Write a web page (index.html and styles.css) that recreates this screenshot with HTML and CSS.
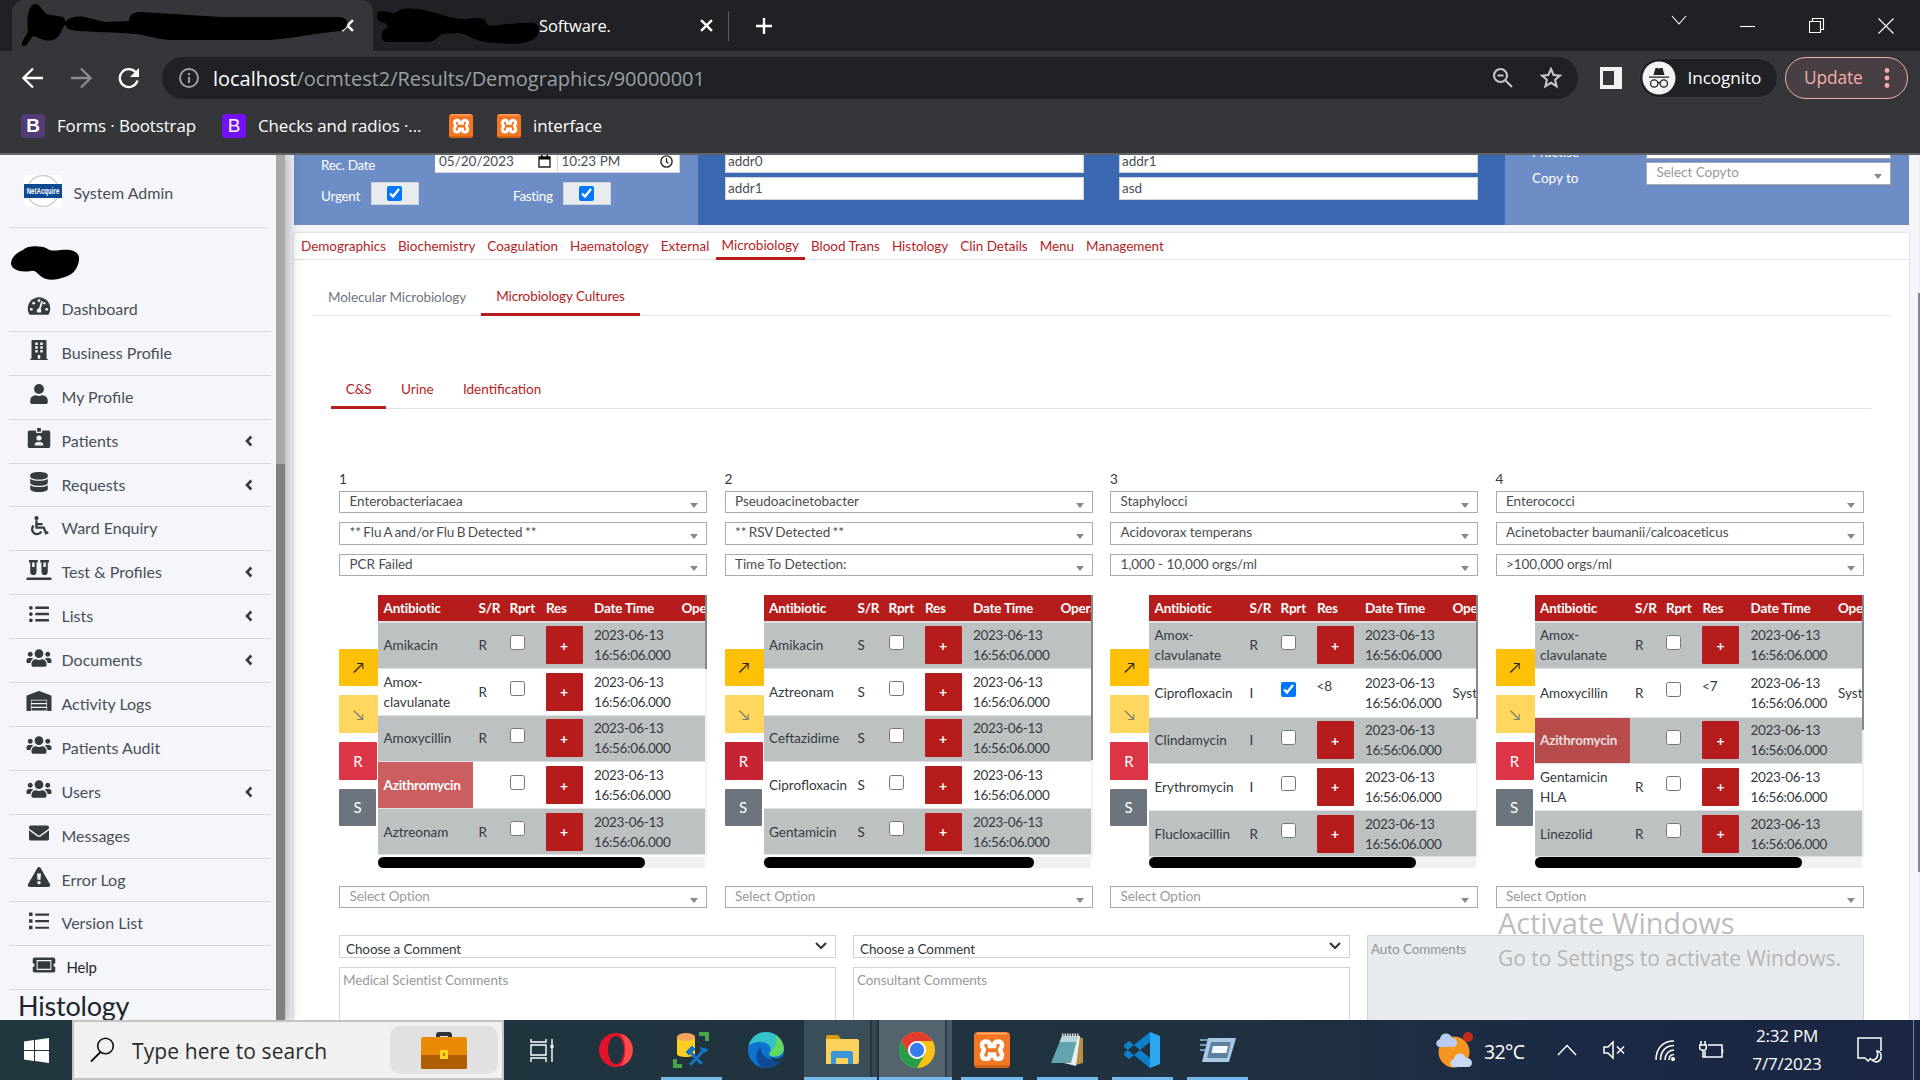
FILE: index.html
```html
<!DOCTYPE html>
<html lang="en">
<head>
<meta charset="utf-8">
<title>Results</title>
<link rel="stylesheet" href="styles.css">
</head>
<body>
<svg class="defs" width="0" height="0" aria-hidden="true">
  <symbol id="i-users" viewBox="0 0 640 512"><path d="M96 224c35 0 64-29 64-64s-29-64-64-64-64 29-64 64 29 64 64 64zm448 0c35 0 64-29 64-64s-29-64-64-64-64 29-64 64 29 64 64 64zm32 32h-64c-18 0-34 7-45 19 40 22 69 62 75 109h66c18 0 32-14 32-32v-32c0-35-29-64-64-64zm-256 0c62 0 112-50 112-112S382 32 320 32 208 82 208 144s50 112 112 112zm77 32h-8c-21 10-44 16-69 16s-48-6-69-16h-8c-64 0-115 52-115 115v29c0 27 22 48 48 48h288c27 0 48-21 48-48v-29c0-63-51-115-115-115zm-224-13c-11-12-27-19-45-19H64c-35 0-64 29-64 64v32c0 18 14 32 32 32h66c6-47 35-87 75-109z"/></symbol>
  <symbol id="i-list" viewBox="0 0 512 512"><path d="M48 48a48 48 0 1 0 0 96 48 48 0 0 0 0-96zm0 160a48 48 0 1 0 0 96 48 48 0 0 0 0-96zm0 160a48 48 0 1 0 0 96 48 48 0 0 0 0-96zM176 64h320c9 0 16 7 16 16v32c0 9-7 16-16 16H176c-9 0-16-7-16-16V80c0-9 7-16 16-16zm0 160h320c9 0 16 7 16 16v32c0 9-7 16-16 16H176c-9 0-16-7-16-16v-32c0-9 7-16 16-16zm0 160h320c9 0 16 7 16 16v32c0 9-7 16-16 16H176c-9 0-16-7-16-16v-32c0-9 7-16 16-16z"/></symbol>
  <symbol id="i-left" viewBox="0 0 8 12"><path d="M6.3 1.5 2 6l4.300 4.500" fill="none" stroke="#343a40" stroke-width="2.600"/></symbol>
  <symbol id="i-xampp" viewBox="0 0 36 36"><rect width="36" height="36" rx="4" fill="#f37623"/><path d="M3 1.500h30" stroke="#ffb27c" stroke-width="1.500"/><path d="M1 34.500h34" stroke="#c95b10" stroke-width="2"/><path d="M12 9.500c-4 0-5 4-3 6.500 1 1 1 2.500 0 4-2 3-1 7 3 7 3 0 4-2 4-4.500h4c0 2.500 1 4.500 4 4.500 4 0 5-4 3-7-1-1.500-1-3 0-4 2-2.500 1-6.500-3-6.500-3 0-4 2-4 4.500h-4c0-2.500-1-4.500-4-4.500z" fill="none" stroke="#fff" stroke-width="4.500"/></symbol>
  <symbol id="i-x" viewBox="0 0 12 12"><path d="M1 1l10 10M11 1 1 11" stroke="#fff" stroke-width="2.200"/></symbol>
</svg>

<header class="browser">
  <div class="tabstrip">
    <div class="tab tab-active">
      <svg class="ink" width="332" height="44" viewBox="0 0 332 44"><path d="M1 40C2 34 6 32 7 26 5 14 8 0 14 0c6 0 7 8 12 10 7 2 14 2 16 3 3 3 2 5 2 5 6-7 18-6 24-4l16 4 24-1c0-7 6-9 12-9l80 5h118c12 1 10 11 2 14-20 1-50 8-72 9h-98c-10 0-22-4-35-6-25-2-55-2-65-4-6-2-6-6-6-6-4 8-6 14-12 16-8 2-12-2-20-4l-6 8c-2 3-5 3-5 0z"/></svg>
      <svg width="13" height="13"><use href="#i-x"/></svg>
    </div>
    <div class="tab">
      <svg class="ink" width="164" height="38" viewBox="0 0 164 38"><path d="M0 7c2-5 10-2 18-1 6-5 14-5 22-4 20 2 30 10 46 10 10 0 16-3 22 1 2 3 1 5 5 6 12-1 22-3 36-3 14-2 14 5 12 11-6 12-28 10-40 9-14 0-26-4-33-9-8-2-14 0-23 0-6 4-8 8-14 8H10c-8-2-6-10-2-13 5-3 2-5-1-6-5-1-8-4-7-9z"/></svg>
      <span class="tab-title">Software.</span>
      <svg width="13" height="13"><use href="#i-x"/></svg>
    </div>
    <svg class="plus" width="18" height="18" viewBox="0 0 18 18"><path d="M9 1v16M1 9h16" stroke="#fff" stroke-width="2.400"/></svg>
    <div class="win">
      <svg width="16" height="16" viewBox="0 0 16 16"><path d="M1 4l7 8 7-8"/></svg>
      <svg width="16" height="16" viewBox="0 0 16 16"><path d="M0 8.500h15"/></svg>
      <svg width="16" height="16" viewBox="0 0 16 16"><path d="M.5 3.500h11v11H.5zM3.500 3.500v-3h11v11h-3"/></svg>
      <svg width="16" height="16" viewBox="0 0 16 16"><path d="M.5.5l15 15M15.500.5l-15 15"/></svg>
    </div>
  </div>
  <div class="toolbar">
    <svg class="nav-i" width="22" height="22" viewBox="0 0 22 22"><path d="M21 11H2M11 1.500 1.500 11l9.500 9.500" stroke="#fff"/></svg>
    <svg class="nav-i" width="22" height="22" viewBox="0 0 22 22"><path d="M1 11h19M11 1.500l9.500 9.500-9.500 9.500" stroke="#8a8b8e"/></svg>
    <svg class="nav-i" width="22" height="22" viewBox="0 0 22 22"><path d="M19.500 13.500A9 9 0 1 1 17.500 5" stroke="#fff"/><path class="tip" d="M21 1v9h-9z"/></svg>
    <div class="omnibox">
      <svg width="22" height="22" viewBox="0 0 22 22"><circle cx="11" cy="11" r="9" fill="none" stroke="#9aa0a6" stroke-width="2"/><path d="M11 10v6M11 6v2.200" stroke="#9aa0a6" stroke-width="2"/></svg>
      <span class="url"><b>localhost</b>/ocmtest2/Results/Demographics/90000001</span>
      <svg class="zoom-i" width="22" height="22" viewBox="0 0 22 22"><circle cx="8.500" cy="8.500" r="6.500"/><path d="M13.500 13.500l6.500 6.500M5.500 8.500h6"/></svg>
      <svg class="zoom-i" width="22" height="22" viewBox="0 0 22 22"><path d="M11 2l2.600 6 6.400.6-4.900 4.200 1.500 6.400L11 15.800l-5.600 3.400 1.500-6.400L2 8.600 8.400 8z"/></svg>
    </div>
    <svg width="22" height="22" viewBox="0 0 22 22"><path d="M0 0h22v22H0z" fill="#f1f3f4"/><path d="M3 4h11v14H3z" fill="#35363a"/></svg>
    <div class="incog"><svg width="34" height="34" viewBox="0 0 34 34"><circle cx="17" cy="17" r="16.500" fill="#f1f3f4"/><path d="M11.500 14 13.500 7h2.300l1.200.7 1.200-.7h2.300l2 7zM7 15.500h20v1.200H7z" fill="#202124"/><path d="M16 22c.6-.6 1.400-.6 2 0" fill="none" stroke="#202124" stroke-width="1.300"/><circle cx="12.200" cy="22.500" r="3.700" fill="none" stroke="#202124" stroke-width="1.300"/><circle cx="21.800" cy="22.500" r="3.700" fill="none" stroke="#202124" stroke-width="1.300"/></svg><span>Incognito</span></div>
    <div class="update"><span>Update</span><svg width="6" height="22" viewBox="0 0 6 22" fill="#f6aea9"><circle cx="3" cy="3.500" r="2.400"/><circle cx="3" cy="11" r="2.400"/><circle cx="3" cy="18.500" r="2.400"/></svg></div>
  </div>
  <div class="bookmarks">
    <span class="bm bm1"><i class="bs">B</i>Forms · Bootstrap</span>
    <span class="bm bm2"><i class="bs bs2">B</i>Checks and radios ·...</span>
    <svg width="24" height="24"><use href="#i-xampp"/></svg>
    <span class="bm bm3"><svg width="24" height="24"><use href="#i-xampp"/></svg>interface</span>
  </div>
</header>

<div class="page">
  <aside class="sidebar">
    <div class="side-body">
      <div class="brand">
        <svg width="38" height="32" viewBox="0 0 38 32"><path d="M0 0h38v32H0z" fill="#fff"/><circle cx="19" cy="16" r="15.500" fill="none" stroke="#ccc" stroke-width="1.300"/><path d="M0 9h38v14H0z" fill="#0d4a92"/><text transform="translate(19 19) scale(.72 1)" text-anchor="middle" class="logo-t">NetAcquire</text></svg>
        <span>System Admin</span>
      </div>
      <svg class="blob" width="69" height="36" viewBox="0 0 69 36"><path d="M0 17C1 9 8 6 12 4c5-5 18-4 23-2 5 3 5 3 15 2 10-1 19 1 18 10-1 8-5 14-14 17-8 3-18 4-23 0-5-3-6-7-11-6C8 27 0 23 0 17z"/></svg>
      <nav class="menu">
        <a><svg viewBox="0 0 576 512"><path d="M288 32C129 32 0 161 0 320c0 53 14 102 39 145 6 9 16 15 28 15h442c12 0 22-6 28-15 25-43 39-92 39-145C576 161 447 32 288 32z"/><g fill="#f4f6fb"><circle cx="288" cy="116" r="36"/><circle cx="152" cy="184" r="36"/><circle cx="92" cy="340" r="36"/><circle cx="484" cy="340" r="36"/><circle cx="424" cy="184" r="30"/><path d="M345 130l45 14-60 190c20 22 22 60 8 90h-100c-20-45-4-98 50-110z"/></g></svg><span>Dashboard</span></a>
        <a><svg viewBox="0 0 448 512"><path d="M436 480h-20V24c0-13-11-24-24-24H56C43 0 32 11 32 24v456H12c-7 0-12 5-12 12v20h448v-20c0-7-5-12-12-12z"/><path fill="#f4f6fb" d="M128 64h64v64h-64zM256 64h64v64h-64zM128 160h64v64h-64zM256 160h64v64h-64zM128 256h64v64h-64zM256 256h64v64h-64zM192 384h64v96h-64z"/></svg><span>Business Profile</span></a>
        <a><svg viewBox="0 0 448 512"><circle cx="224" cy="128" r="128"/><path d="M314 288h-17a174 174 0 0 1-146 0h-17A134 134 0 0 0 0 422v42c0 27 22 48 48 48h352c27 0 48-21 48-48v-42a134 134 0 0 0-134-134z"/></svg><span>My Profile</span></a>
        <a><svg viewBox="0 0 576 512"><path d="M528 64H368v32c0 18-14 32-32 32h-96c-18 0-32-14-32-32V64H48C22 64 0 86 0 112v352c0 26 22 48 48 48h480c26 0 48-22 48-48V112c0-26-22-48-48-48z"/><path d="M240 0h96v96h-96z"/><g fill="#f4f6fb"><circle cx="288" cy="256" r="66"/><path d="M176 448c0-60 30-92 80-92h64c50 0 80 32 80 92z"/></g></svg><span>Patients</span><svg class="more"><use href="#i-left"/></svg></a>
        <a><svg viewBox="0 0 448 512"><path d="M448 73v46c0 40-100 73-224 73S0 159 0 119V73C0 33 100 0 224 0s224 33 224 73zm0 103v103c0 40-100 73-224 73S0 319 0 279V176c48 33 136 49 224 49s176-16 224-49zm0 160v103c0 40-100 73-224 73S0 479 0 439V336c48 33 136 49 224 49s176-16 224-49z"/></svg><span>Requests</span><svg class="more"><use href="#i-left"/></svg></a>
        <a><svg viewBox="0 0 512 512"><circle cx="192" cy="54" r="54"/><path d="M190 110v190h190l55 140 60-25M190 205h160M120 245a125 125 0 1 0 195 150" fill="none" stroke="#343a40" stroke-width="58"/></svg><span>Ward Enquiry</span></a>
        <a><svg viewBox="0 0 640 512"><path d="M640 464v32c0 9-7 16-16 16H16c-9 0-16-7-16-16v-32c0-9 7-16 16-16h608c9 0 16 7 16 16zM64 0h224v64h-32v240a80 80 0 0 1-160 0V64H64zm288 0h224v64h-32v240a80 80 0 0 1-160 0V64h-32z"/><path fill="#f4f6fb" d="M144 64h64v112h-64zM432 64h64v112h-64z"/></svg><span>Test &amp; Profiles</span><svg class="more"><use href="#i-left"/></svg></a>
        <a><svg><use href="#i-list"/></svg><span>Lists</span><svg class="more"><use href="#i-left"/></svg></a>
        <a><svg class="wide"><use href="#i-users"/></svg><span>Documents</span><svg class="more"><use href="#i-left"/></svg></a>
        <a><svg class="wide" viewBox="0 0 640 512"><path d="M0 512V145c0-15 8-28 22-34L300 4a56 56 0 0 1 40 0l278 107c14 6 22 19 22 34v367H528V224H112v288zM128 240h384v64H128zm0 96h384v64H128zm0 96h384v64H128z"/></svg><span>Activity Logs</span></a>
        <a><svg class="wide"><use href="#i-users"/></svg><span>Patients Audit</span></a>
        <a><svg class="wide"><use href="#i-users"/></svg><span>Users</span><svg class="more"><use href="#i-left"/></svg></a>
        <a><svg viewBox="0 0 512 512"><path d="M502 191c4-3 10 0 10 4v205c0 27-21 48-48 48H48c-27 0-48-21-48-48V195c0-5 6-7 10-4 22 18 52 40 155 114 21 16 57 48 91 48 34 0 71-33 91-48 103-74 133-96 155-114zM256 320c23 0 57-29 74-42 133-96 143-105 173-128 6-5 9-12 9-19v-19c0-27-21-48-48-48H48C21 64 0 85 0 112v19c0 7 3 14 9 19 31 24 41 32 173 128 17 13 51 42 74 42z"/></svg><span>Messages</span></a>
        <a><svg viewBox="0 0 576 512"><path d="M570 440c18 32-5 72-42 72H48c-37 0-60-40-42-72L246 24c18-32 65-32 84 0z"/><path fill="#f4f6fb" d="M240 168h96l-9 160h-78z"/><circle fill="#f4f6fb" cx="288" cy="400" r="44"/></svg><span>Error Log</span></a>
        <a><svg viewBox="0 0 512 512"><path d="M0 40h90v90H0zm0 170h90v90H0zm0 170h90v90H0zM160 64h352v56H160zm0 168h352v56H160zm0 168h352v56H160z"/></svg><span>Version List</span></a>
        <a class="help"><svg viewBox="0 0 576 512"><path d="M48 64h480c27 0 48 21 48 48v96a48 48 0 0 0 0 96v96c0 27-21 48-48 48H48c-27 0-48-21-48-48v-96a48 48 0 0 0 0-96v-96c0-27 21-48 48-48z"/><path d="M112 144h352v224H112z" fill="none" stroke="#f4f6fb" stroke-width="26"/></svg><span>Help</span></a>
      </nav>
      <h2>Histology</h2>
    </div>
    <div class="side-scroll"><i></i></div>
  </aside>

  <main class="main">
    <section class="patient">
      <div class="p-side">
        <div class="row r1"><label>Rec. Date</label><div class="dt"><span>05/20/2023</span><svg width="13" height="13" viewBox="0 0 13 13"><path d="M1 2h11v10H1z" fill="none" stroke="#222" stroke-width="1.400"/><path d="M1 2h11v2.500H1zM3 0h1.500v2H3zM8.500 0H10v2H8.500z"/></svg></div><div class="dt"><span>10:23 PM</span><svg width="13" height="13" viewBox="0 0 13 13"><circle cx="6.500" cy="6.500" r="5.600" fill="none" stroke="#222" stroke-width="1.400"/><path d="M6.500 3v4l2 1.200" fill="none" stroke="#222" stroke-width="1.300"/></svg></div></div>
        <div class="row r2"><label>Urgent</label><div class="cb"><input type="checkbox" checked></div><label class="fast">Fasting</label><div class="cb"><input type="checkbox" checked></div></div>
      </div>
      <div class="p-mid"><div class="f top">addr0</div><div class="f top">addr1</div><div class="f">addr1</div><div class="f">asd</div></div>
      <div class="p-right"><label class="cut">Practise</label><div class="sel cutsel"></div><label>Copy to</label><div class="sel ph">Select Copyto</div></div>
    </section>

    <section class="card">
      <nav class="tabs t1"><a>Demographics</a><a>Biochemistry</a><a>Coagulation</a><a>Haematology</a><a>External</a><a class="on">Microbiology</a><a>Blood Trans</a><a>Histology</a><a>Clin Details</a><a>Menu</a><a>Management</a></nav>
      <nav class="tabs t2"><a class="muted">Molecular Microbiology</a><a class="on">Microbiology Cultures</a></nav>
      <nav class="tabs t3"><a class="on">C&amp;S</a><a>Urine</a><a>Identification</a></nav>

      <div class="cols">
        <div class="col">
          <div class="num">1</div>
          <div class="sel">Enterobacteriacaea</div><div class="sel starred">** Flu A and/or Flu B Detected **</div><div class="sel">PCR Failed</div>
          <div class="grid">
            <div class="acts"><b class="up">↗</b><b class="down">↘</b><b class="r">R</b><b class="s">S</b></div>
            <div class="scroll"><div class="clip"><table>
              <tr><th class="c1">Antibiotic<th class="c2">S/R<th class="c3">Rprt<th class="c4">Res<th class="c5">Date Time<th class="c6">Operator</tr>
              <tr><td>Amikacin<td>R<td><input type="checkbox"><td><button>+</button><td>2023-06-13 16:56:06.000<td></tr>
              <tr><td>Amox-clavulanate<td>R<td><input type="checkbox"><td><button>+</button><td>2023-06-13 16:56:06.000<td></tr>
              <tr><td>Amoxycillin<td>R<td><input type="checkbox"><td><button>+</button><td>2023-06-13 16:56:06.000<td></tr>
              <tr><td class="hot">Azithromycin<td><td><input type="checkbox"><td><button>+</button><td>2023-06-13 16:56:06.000<td></tr>
              <tr><td>Aztreonam<td>R<td><input type="checkbox"><td><button>+</button><td>2023-06-13 16:56:06.000<td></tr>
            </table></div><div class="vbar"><i class="v1"></i></div><div class="hbar"><i></i></div></div>
          </div>
          <div class="sel ph">Select Option</div>
        </div>
        <div class="col">
          <div class="num">2</div>
          <div class="sel">Pseudoacinetobacter</div><div class="sel starred">** RSV Detected **</div><div class="sel">Time To Detection:</div>
          <div class="grid">
            <div class="acts"><b class="up">↗</b><b class="down">↘</b><b class="r dark">R</b><b class="s">S</b></div>
            <div class="scroll"><div class="clip"><table>
              <tr><th class="c1 slim">Antibiotic<th class="c2">S/R<th class="c3">Rprt<th class="c4">Res<th class="c5">Date Time<th class="c6">Operator</tr>
              <tr><td>Amikacin<td>S<td><input type="checkbox"><td><button>+</button><td>2023-06-13 16:56:06.000<td></tr>
              <tr><td>Aztreonam<td>S<td><input type="checkbox"><td><button>+</button><td>2023-06-13 16:56:06.000<td></tr>
              <tr><td>Ceftazidime<td>S<td><input type="checkbox"><td><button>+</button><td>2023-06-13 16:56:06.000<td></tr>
              <tr><td>Ciprofloxacin<td>S<td><input type="checkbox"><td><button>+</button><td>2023-06-13 16:56:06.000<td></tr>
              <tr><td>Gentamicin<td>S<td><input type="checkbox"><td><button>+</button><td>2023-06-13 16:56:06.000<td></tr>
            </table></div><div class="vbar"><i class="v2"></i></div><div class="hbar"><i class="h2"></i></div></div>
          </div>
          <div class="sel ph">Select Option</div>
        </div>
        <div class="col">
          <div class="num">3</div>
          <div class="sel">Staphylocci</div><div class="sel">Acidovorax temperans</div><div class="sel">1,000 - 10,000 orgs/ml</div>
          <div class="grid">
            <div class="acts"><b class="up">↗</b><b class="down">↘</b><b class="r">R</b><b class="s">S</b></div>
            <div class="scroll"><div class="clip"><table>
              <tr><th class="c1">Antibiotic<th class="c2">S/R<th class="c3">Rprt<th class="c4">Res<th class="c5">Date Time<th class="c6">Operator</tr>
              <tr><td>Amox-clavulanate<td>R<td><input type="checkbox"><td><button>+</button><td>2023-06-13 16:56:06.000<td></tr>
              <tr class="tall"><td>Ciprofloxacin<td>I<td><input type="checkbox" checked><td class="res">&lt;8<td>2023-06-13 16:56:06.000<td>System</tr>
              <tr><td>Clindamycin<td>I<td><input type="checkbox"><td><button>+</button><td>2023-06-13 16:56:06.000<td></tr>
              <tr><td>Erythromycin<td>I<td><input type="checkbox"><td><button>+</button><td>2023-06-13 16:56:06.000<td></tr>
              <tr><td>Flucloxacillin<td>R<td><input type="checkbox"><td><button>+</button><td>2023-06-13 16:56:06.000<td></tr>
            </table></div><div class="vbar"><i class="v3"></i></div><div class="hbar"><i></i></div></div>
          </div>
          <div class="sel ph">Select Option</div>
        </div>
        <div class="col">
          <div class="num">4</div>
          <div class="sel">Enterococci</div><div class="sel">Acinetobacter baumanii/calcoaceticus</div><div class="sel">&gt;100,000 orgs/ml</div>
          <div class="grid">
            <div class="acts"><b class="up">↗</b><b class="down">↘</b><b class="r">R</b><b class="s">S</b></div>
            <div class="scroll"><div class="clip"><table>
              <tr><th class="c1">Antibiotic<th class="c2">S/R<th class="c3">Rprt<th class="c4">Res<th class="c5">Date Time<th class="c6">Operator</tr>
              <tr><td>Amox-clavulanate<td>R<td><input type="checkbox"><td><button>+</button><td>2023-06-13 16:56:06.000<td></tr>
              <tr class="tall"><td>Amoxycillin<td>R<td><input type="checkbox"><td class="res">&lt;7<td>2023-06-13 16:56:06.000<td>System</tr>
              <tr><td class="hot">Azithromycin<td><td><input type="checkbox"><td><button>+</button><td>2023-06-13 16:56:06.000<td></tr>
              <tr><td>Gentamicin HLA<td>R<td><input type="checkbox"><td><button>+</button><td>2023-06-13 16:56:06.000<td></tr>
              <tr><td>Linezolid<td>R<td><input type="checkbox"><td><button>+</button><td>2023-06-13 16:56:06.000<td></tr>
            </table></div><div class="vbar"><i class="v4"></i></div><div class="hbar"><i></i></div></div>
          </div>
          <div class="sel ph">Select Option</div>
        </div>
      </div>

      <div class="comments">
        <div><div class="pick">Choose a Comment<svg width="14" height="9" viewBox="0 0 14 9"><path d="M2 2l5 5 5-5" fill="none" stroke="#343a40" stroke-width="2.200"/></svg></div><div class="area">Medical Scientist Comments</div></div>
        <div><div class="pick">Choose a Comment<svg width="14" height="9" viewBox="0 0 14 9"><path d="M2 2l5 5 5-5" fill="none" stroke="#343a40" stroke-width="2.200"/></svg></div><div class="area">Consultant Comments</div></div>
        <div class="area auto">Auto Comments</div>
      </div>
    </section>
    <div class="page-scroll"></div>
  </main>
  <div class="watermark"><p class="w1">Activate Windows</p><p class="w2">Go to Settings to activate Windows.</p></div>
</div>

<footer class="taskbar">
  <div class="start"><svg width="25" height="25" viewBox="0 0 25 25" fill="#fff"><path d="M0 3.500 10 2v10H0zM11 1.900 25 0v12H11zM0 13h10v10L0 21.500zM11 13h14v12l-14-1.900z"/></svg></div>
  <div class="search">
    <svg width="26" height="26" viewBox="0 0 26 26"><circle cx="16.500" cy="9" r="7.800" fill="none" stroke="#111" stroke-width="1.600"/><path d="M11.500 15 2 24.500" stroke="#111" stroke-width="1.800"/></svg>
    <span>Type here to search</span>
    <div class="hl"><svg width="46" height="38" viewBox="0 0 46 38"><path d="M15 7V4c0-2 1-3 3-3h10c2 0 3 1 3 3v3h-4V5h-8v2z" fill="#30343a"/><rect y="6" width="46" height="32" rx="2" fill="#e88a06"/><path d="M0 24h46v12c0 1-1 2-2 2H2c-1 0-2-1-2-2z" fill="#ae5d02"/><path d="M19 19h8v9h-8z" fill="#ffd21f"/><path d="M22 22h2v3h-2z" fill="#b07800"/></svg></div>
  </div>
  <div class="apps">
    <div class="app"><svg width="25" height="25" viewBox="0 0 25 25" fill="none" stroke="#fff" stroke-width="1.400"><path d="M1 1v3h15V1M1 24v-4h15v4M1 7h15v10H1zM22 1v23"/><path d="M20.500 7h3v3h-3z" fill="#fff" stroke="none"/></svg></div>
    <div class="app"><svg width="36" height="36" viewBox="0 0 36 36"><ellipse cx="18" cy="18" rx="17" ry="17" fill="#e3132a"/><ellipse cx="18" cy="18" rx="8" ry="14" fill="#21343f"/><path d="M22 2c17 3 17 29 0 32 7-6 7-26 0-32z" fill="#ff4b4b"/></svg></div>
    <div class="app run"><svg width="36" height="36" viewBox="0 0 36 36"><path d="M4 4v18c0 4 18 4 18 0V4z" fill="#fdcf22"/><ellipse cx="13" cy="5" rx="9" ry="4" fill="#f3a55c"/><path d="M26 2h8v7M2 27v7h7" fill="none" stroke="#4ba449" stroke-width="4"/><path d="M16 19l13 13M30 19 17 33" fill="none" stroke="#1673c4" stroke-width="3"/><path d="M13 20l6-6 3 3-6 6zM27 15l2 4 4 1 2-3" fill="#1673c4" stroke="#1673c4"/></svg></div>
    <div class="app"><svg width="36" height="36" viewBox="0 0 36 36"><defs><clipPath id="disc"><circle cx="18" cy="18" r="18"/></clipPath></defs><g clip-path="url(#disc)"><path d="M0 0h36v36H0z" fill="#0c73cf"/><path d="M0 14C3 3 12-2 22 0c9 2 14 9 14 16 0 6-5 9-10 9-4 0-6-2-4-4 3-6-3-11-9-11-6 0-11 2-13 4z" fill="#35c1c9"/><path d="M27 2c6 4 9 9 9 14 0 6-6 9-12 8-3-1-3-3-1-5 5-5 7-10 4-17z" fill="#62d95b"/><path d="M33 28c-4 6-11 9-17 8-9-3-10-15-3-21-1 9 8 15 20 13z" fill="#114a94"/><path d="M22 24c4 4 9 3 13 0l3 3-5 2c-6 1-10-1-11-5z" fill="#20343f"/></g></svg></div>
    <div class="app run lit"><svg width="34" height="34" viewBox="0 0 34 34"><path d="M1 4c0-1 1-2 2-2h10l3 4H1z" fill="#dc9c0b"/><path d="M1 6h31c1 0 2 1 2 2v21c0 1-1 2-2 2H1z" fill="#fbd35c"/><path d="M6 31V20c0-1 1-2 2-2h18c1 0 2 1 2 2v11h-5v-6H11v6z" fill="#3b96d8"/></svg></div>
    <div class="app run lit more-lit"><svg width="36" height="36" viewBox="0 0 36 36"><circle cx="18" cy="18" r="18" fill="#fbc116"/><path d="M2.400 9A18 18 0 0 1 33.600 9H18l-7.800 13.500z" fill="#e33b2e"/><path d="M2.400 9A18 18 0 0 0 18 36l7.800-13.500H10.200z" fill="#2a9d4b"/><circle cx="18" cy="18" r="9" fill="#fff"/><circle cx="18" cy="18" r="7.200" fill="#377df0"/></svg></div>
    <div class="app run"><svg width="36" height="36"><use href="#i-xampp"/></svg></div>
    <div class="app run"><svg width="34" height="34" viewBox="0 0 34 34"><path d="M28 4l5 1v25l-8 2z" fill="#b98d46"/><path d="M14 3h16l-4 30-12-3z" fill="#e9eef0"/><path d="M12 3h16l-7 27H1z" fill="#62a3ae"/><path d="M12 3h16l-1.500 6H9.500z" fill="#b8d6da"/><path d="M12 2h17" stroke="#ddd" stroke-width="3" stroke-dasharray="1.500 1"/></svg></div>
    <div class="app run"><svg width="36" height="36" viewBox="0 0 36 36"><path d="M26 0l10 4v28l-10 4z" fill="#2aa9f2"/><path d="M26 0v10L5 27 0 23v-2zM26 36V26L5 9 0 13v2z" fill="#0f7fcb"/></svg></div>
    <div class="app run"><svg width="36" height="26" viewBox="0 0 36 26"><path d="M8 1h28l-7 24H2z" fill="#a9c8e6"/><path d="M11 5h20l-4 16H7z" fill="#5f7f9c"/><path d="M13 9h15l-1.500 7H11.500z" fill="#f4f8fc"/><path d="M0 3h9M0 8h7M0 13h6" stroke="#8db6de" stroke-width="1.500"/></svg></div>
  </div>
  <div class="tray">
    <svg width="38" height="38" viewBox="0 0 38 38"><circle cx="18" cy="21" r="15.500" fill="#f6961e"/><path d="M4 16c-5 0-5-7 0-8 1-7 10-7 12-1 6-1 7 9 1 9z" fill="#b9cdf0"/><circle cx="32" cy="6" r="5" fill="#c42b1c"/><path d="M18 36c-5 0-5-7 0-8 1-7 10-7 12-1 7-1 8 9 2 9z" fill="#c9d9f5"/></svg>
    <span class="temp">32°C</span>
    <svg class="ti chev" width="20" height="12" viewBox="0 0 20 12"><path d="M1 11l9-9.500 9 9.500"/></svg>
    <svg class="ti snd" width="24" height="20" viewBox="0 0 24 20"><path d="M1 7h4l5-5v16l-5-5H1zM14 6.500l7 7M21 6.500l-7 7"/></svg>
    <svg class="ti wifi" width="22" height="22" viewBox="0 0 22 22"><path d="M2 21C2 9 9 2 20 2M6.500 21C6.500 12 12 6.500 20 6.500M11 21c0-6 4-10 9-10M15 21c0-4 2-5.500 5-5.500"/><circle cx="19" cy="20" r="1.300" fill="#fff"/></svg>
    <svg class="ti bat" width="26" height="20" viewBox="0 0 26 20"><path d="M9 5h14v12H6v-6M23.500 9v4M2 1v4M6 1v4M.7 5h6.600v3c0 3-6.600 3-6.600 0zM4 10v7h2"/></svg>
    <div class="clock"><span>2:32 PM</span><span>7/7/2023</span></div>
    <svg class="ti note" width="28" height="28" viewBox="0 0 28 28"><path d="M14 22l-3 3-3-3H1V2h23v13M20 15c2 6-1 9-5 9 4 4 10 1 9-5 0-2-2-4-4-4z"/></svg>
    <i class="peek"></i>
  </div>
</footer>
</body>
</html>
```
FILE: styles.css
```css
* { box-sizing: border-box; }
html, body { margin: 0; height: 1080px; overflow: hidden; }
body { width: 1920px; display: flex; flex-direction: column; font-family: Lato, "Noto Sans", sans-serif; background: #f4f6fb; }
.defs { position: absolute; }
p, h2 { margin: 0; font-weight: 400; }
svg { flex: none; display: block; }

/* browser chrome */
.browser { height: 155px; flex: none; background: #35363a; border-bottom: 2px solid #626366; font-family: "Open Sans", "Noto Sans", sans-serif; color: #fff; }
.tabstrip { height: 51px; background: #202124; display: flex; align-items: center; padding-left: 12px; }
.tab { height: 51px; display: flex; align-items: center; width: 357px; border-right: 1px solid transparent; padding: 0 16px 0 4px; }
.tab > svg:last-child { margin-left: auto; }
.tab-active { background: #35363a; border-radius: 12px 12px 0 0; width: 361px; padding: 0 18px 0 9px; }
.tab-active .ink { margin-right: -14px; }
.tab-title { font-size: 16.5px; letter-spacing: -.1px; margin-left: -2px; }
.tab:nth-child(2) { background: linear-gradient(#5a5b5e, #5a5b5e) right center / 1px 30px no-repeat; }
.ink { position: relative; z-index: 1; }
.plus { margin-left: 25px; }
.win { margin-left: auto; display: flex; gap: 53px; padding-right: 26px; }
.win path { fill: none; stroke: #fff; stroke-width: 1.1; }
.win svg:first-child { margin-top: -6px; }
.toolbar { height: 54px; display: flex; align-items: center; padding: 0 12px 0 22px; }
.nav-i { margin-right: 26px; }
.nav-i path { fill: none; stroke-width: 2.3; }
.nav-i path.tip { fill: #fff; }
.omnibox { width: 1416px; height: 42px; margin-left: -4px; border-radius: 21px; background: #202124; display: flex; align-items: center; padding: 0 16px; margin-right: 22px; }
.url { font-size: 20px; letter-spacing: -.03px; color: #9aa0a6; margin-left: 13px; margin-right: auto; }
.url b { color: #fff; font-weight: 400; }
.zoom-i { margin-left: 26px; fill: none; stroke: #c4c7ca; stroke-width: 2.1; }
.incog { margin-left: 17px; width: 139px; height: 40px; border-radius: 20px; background: #202124; border: 1px solid #3c3d41; display: flex; align-items: center; padding-left: 2px; gap: 11.5px; font-size: 17.2px; letter-spacing: -.1px; }
.incog span, .update span { margin-top: -2px; }
.update { margin-left: 7px; width: 123px; height: 42px; border-radius: 21px; border: 1.5px solid #f6aea9; background: #473f43; color: #f6aea9; display: flex; align-items: center; justify-content: space-between; padding: 0 17px 0 18px; font-size: 17.3px; letter-spacing: -.1px; }
.bookmarks { height: 42px; display: flex; align-items: center; padding: 0 0 1px 21px; font-size: 16.9px; letter-spacing: -.1px; }
.bookmarks > svg { margin-right: 24px; }
.bm { display: flex; align-items: center; gap: 12px; white-space: nowrap; }
.bm1 { width: 201px; }
.bm2 { width: 227px; }
.bs { width: 24px; height: 24px; border-radius: 3px; background: #533b78; font: 700 19px/24px "Liberation Sans", sans-serif; text-align: center; }
.bs2 { background: #7511f7; font-weight: 400; }

/* page */
.page { position: relative; height: 865px; flex: none; display: flex; overflow: hidden; background: #f4f6fb; }
.sidebar { width: 285px; display: flex; flex: none; box-shadow: 0 0 14px 3px rgba(0,0,0,.3); z-index: 2; background: #f4f6fb; }
.side-body { width: 276px; padding-left: 9px; color: #4a4f55; overflow: hidden; }
.brand { height: 73px; width: 258px; border-bottom: 1px solid #d9dbdf; display: flex; align-items: center; padding: 0 0 0 15px; gap: 11.5px; font-size: 16px; letter-spacing: 0; }
.brand span { padding-top: 2px; }
.logo-t { font: 700 8.500px "Liberation Sans", sans-serif; fill: #fff; }
.blob { margin: 18px 0 0 2px; }
.menu { margin-top: 6px; }
.menu a { height: 43.9px; width: 262px; border-bottom: 1px solid #d5d8dc; display: flex; align-items: center; padding: 0 18px 1px 17px; font-size: 16px; letter-spacing: 0; }
.menu a > span { margin-top: -1px; }
.menu a > svg:first-child { width: 26px; height: 20px; margin: 0 9.500px 5px 0; fill: #343a40; }
.menu a > svg.more { width: 8px; height: 12px; margin-left: auto; }
.menu a.help { padding-left: 22px; font-size: 15px; color: #24282c; letter-spacing: -.2px; }
.sidebar h2 { font-size: 27px; line-height: 34px; padding-left: 9px; margin-top: -1px; letter-spacing: -.2px; color: #212529; }
.side-scroll { width: 9px; background: #808080; }
.side-scroll i { display: block; height: 309px; background: #a9a9a9; }

.main { flex: none; width: 1635px; padding-left: 9px; position: relative; font-size: 13.5px; color: #343a40; }
.patient { width: 1615px; height: 70px; display: flex; color: #fff; }
.p-side { width: 404px; background: #6c8dc5; padding-left: 27px; }
.row { display: flex; }
.row label { letter-spacing: -.3px; }
.r1 label { width: 114px; padding-top: 2px; }
.dt { width: 122.5px; height: 18px; background: #fff; border: solid #ced4da; border-width: 0 1px 1px 0; color: #495057; display: flex; justify-content: space-between; padding: 0 6px 0 4px; line-height: 13px; font-size: 13.5px; letter-spacing: 0; }
.r2 { margin-top: 9px; align-items: center; }
.r2 label { width: 50px; padding-top: 5px; }
.r2 label.fast { margin-left: 94px; width: 50px; }
.cb { width: 48px; height: 23px; background: #e9ecef; border: 1px solid #ced4da; display: flex; justify-content: center; }
input[type=checkbox] { width: 15px; height: 15px; margin: 0; display: block; }
.cb input { margin-top: 3px; margin-right: 1px; }
.p-mid { width: 807px; background: #3b69b1; padding: 0 27px; display: grid; grid-template-columns: 359px 359px; grid-template-rows: 18px 23px; gap: 4px 35px; align-content: start; }
.f { background: #fff; border: 1px solid #ced4da; color: #495057; padding: 2px 2px; line-height: 16px; font-size: 13.5px; }
.f.top { border-top: 0; padding: 0 2px; line-height: 12px; }
.p-right { width: 404px; background: #6c8dc5; display: grid; grid-template-columns: 114px 245px; grid-template-rows: 4px 23px; row-gap: 3px; padding-left: 27px; align-content: start; }
.p-right label { padding-top: 8px; }
.p-right label.cut { padding: 0; line-height: 16px; margin-top: -11px; }
.sel { position: relative; height: 22.500px; border: 1px solid #a9aaac; background: #fff; color: #4a4d50; padding-left: 9.500px; line-height: 18px; font-size: 13.5px; letter-spacing: -.04px; white-space: nowrap; }
.sel.starred { word-spacing: -1px; }
.sel.cutsel { height: 4px; border-top: 0; }
.sel.ph { color: #999; }
.sel:not(.cutsel)::after { content: ""; position: absolute; right: 8px; bottom: 4.500px; border: 4px solid transparent; border-top: 5px solid #888; border-bottom: 0; }

.card { margin-top: 8px; width: 1615px; height: 800px; background: #fff; border-radius: 2px; box-shadow: 0 0 2px rgba(0,0,0,.25); }
.tabs { display: flex; border-bottom: 1px solid #dee2e6; color: #b71c1c; white-space: nowrap; }
.tabs a { margin-bottom: -1px; border-bottom: 3px solid transparent; }
.tabs .on { border-bottom-color: #b71c1c; }
.tabs .muted { color: #6c757d; }
.t1 { height: 27px; padding-left: 1px; }
.t1 a { padding: 0 6px; line-height: 26px; letter-spacing: -.015px; }
.t1 a.on, .t2 a.on, .t3 a.on { line-height: 24px; }
.t2 { height: 56px; margin: 0 19px 0 18px; padding-top: 24px; }
.t2 a { padding: 0 15px 0 16px; line-height: 26px; letter-spacing: -.08px; }
.t2 a.on { padding: 0 15px; }
.t3 { height: 68px; margin: 25px 38px 0 37px; padding-top: 36px; }
.t3 a { padding: 0 14.700px; line-height: 25px; }

.cols { display: flex; gap: 17.500px; margin: 60px 0 0 45px; }
.col { width: 368px; }
.num { line-height: 20px; height: 21.500px; font-size: 13.5px; }
.col > .sel { margin-bottom: 9px; }
.grid { display: flex; margin-top: 18.500px; height: 273px; margin-bottom: 18px; }
.acts { width: 39px; padding-top: 54px; display: flex; flex-direction: column; gap: 9px; }
.acts b { height: 37.700px; font-weight: 400; font-size: 15px; display: flex; align-items: center; justify-content: center; color: #fff; border-radius: 1px; }
.acts .up { background: #ffc107; color: #212529; }
.acts .down { background: #ffd75e; color: #7b7c70; }
.acts .r { background: #dc3545; width: 38px; }
.acts .r.dark { background: #c82333; }
.acts .s { background: #6c757d; width: 37px; }
.scroll { width: 329px; display: grid; grid-template-columns: 327px 2px; grid-template-rows: 262px 11px; }
.clip { overflow: hidden; }
table { table-layout: fixed; width: 400px; border-collapse: separate; border-spacing: 0; color: #343a40; }
th { height: 28px; padding: 0 0 0 5.500px; background: #b71c1c; color: #fff; text-align: left; font-size: 13.500px; letter-spacing: -.2px; border-bottom: 2px solid #dee2e6; white-space: nowrap; }
td { height: 46.600px; padding: 0 0 0 5.500px; border-bottom: 1px solid #dee2e6; font-size: 13.500px; line-height: 20px; }
td:nth-child(5) { letter-spacing: -.32px; }
tr:nth-child(even) td { background: #bdc1c2; }
tr.tall td { height: 48.500px; }
.c1 { width: 95px; } .c1.slim { width: 88.500px; } .c2 { width: 31px; } .c3 { width: 36.500px; } .c4 { width: 48px; } .c5 { width: 87.500px; }
td input[type=checkbox] { margin-bottom: 6px; }
td button { width: 37px; height: 38px; margin: 0; padding: 0; border: 0; border-radius: 1px; display: block; background: #b71c1c; color: #fff; font: 700 14px Lato, sans-serif; }
td:nth-child(4) { padding-left: 5px; }
td.res { vertical-align: top; padding-top: 7px; }
td.hot { background: #cb5e60; color: #fff; font-weight: 700; letter-spacing: -.22px; }
tr:nth-child(even) td.hot { background: #b84c4c; color: #eadfdf; }
.vbar { background: #f1f1f1; }
.vbar i { display: block; background: #888; height: 74px; }
.vbar .v2 { height: 165px; } .vbar .v3 { height: 124px; } .vbar .v4 { height: 135px; }
.hbar { background: #f1f1f1; width: 327px; }
.hbar i { display: block; width: 267px; height: 11px; border-radius: 5.500px; background: #000; }
.hbar i.h2 { width: 270px; }

.comments { display: grid; grid-template-columns: 497px 497px 497px; gap: 17px; margin: 18px 0 0 45px; }
.pick { height: 23px; border: 1px solid #ced4da; display: flex; align-items: center; justify-content: space-between; padding: 5px 7px 0 6px; color: #343a40; margin-bottom: 9px; letter-spacing: -.1px; }
.pick svg { margin-top: -7px; }
.area { height: 120px; border: 1px solid #ced4da; padding: 4px 3px; color: #999; line-height: 17px; letter-spacing: -.1px; }
.auto { background: #e8ebee; height: 150px; color: #8e9398; padding-top: 5px; }
.page-scroll { position: absolute; right: 0; top: 0; width: 2px; height: 865px; background: linear-gradient(#f1f1f1 138px, #888 138px, #888 717px, #f1f1f1 717px); }
.watermark { position: absolute; z-index: 3; left: 1498px; top: 748px; font-family: "Open Sans", sans-serif; color: rgba(150,150,150,.65); white-space: nowrap; }
.w1 { font-size: 29px; line-height: 40px; letter-spacing: -.1px; }
.w2 { font-size: 21px; line-height: 30px; letter-spacing: -.03px; }

/* taskbar */
.taskbar { height: 60px; flex: none; display: flex; background: linear-gradient(90deg, #21373f, #20323f 60%, #1b2945 85%, #1a2642); color: #fff; font-family: "Open Sans", "Noto Sans", sans-serif; }
.start { width: 72px; display: flex; align-items: center; justify-content: center; }
.search { width: 432px; background: #f1f1f1; border: 2px solid #c3c3c3; display: flex; align-items: center; padding: 0 4px 0 15px; color: #2a2a2a; font-size: 21px; letter-spacing: .1px; }
.search span { margin-left: 17px; padding-top: 2px; }
.hl { margin-left: auto; width: 108px; height: 48px; border-radius: 10px; background: #e1e1e1; display: flex; align-items: center; justify-content: center; }
.apps { display: flex; margin-left: 1.500px; }
.app { width: 75.200px; display: flex; align-items: center; justify-content: center; position: relative; }
.app:first-child { width: 73px; }
.run::after { content: ""; position: absolute; left: 7px; right: 7px; bottom: 0; height: 3px; background: #76b9ed; }
.lit { background: linear-gradient(90deg, #3a4e59 66px, #27353e 66px, #27353e 68px, #33464f 68px, #33464f 73px, transparent 73px); }
.more-lit { background: linear-gradient(90deg, #53646e 66px, #2f3e48 66px, #2f3e48 68px, #475963 68px, #475963 73px, transparent 73px); }
.lit::after { left: 0; right: 2px; }
.tray { margin-left: auto; display: flex; align-items: center; padding-right: 6px; }
.temp { font-size: 19.500px; letter-spacing: -.6px; margin-left: 10px; width: 73px; padding-top: 2px; }
.ti { fill: none; stroke: #fff; stroke-width: 1.500; }
.chev { margin-right: 26px; } .snd { margin-right: 27px; } .wifi { margin-right: 23px; } .bat { margin-right: 23px; }
.clock { width: 78px; display: flex; flex-direction: column; align-items: center; font-size: 17px; line-height: 28px; letter-spacing: -.2px; }
.note { margin-left: 31px; margin-right: 28px; }
.peek { width: 1px; height: 60px; background: #7b8397; }
```
